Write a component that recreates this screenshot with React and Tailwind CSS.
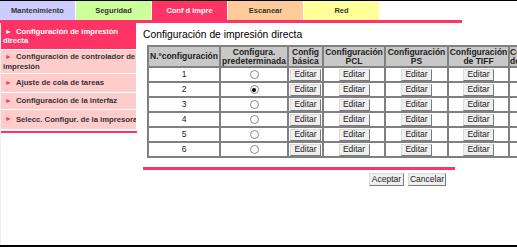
import React from "react";

const tabs = [
  { label: "Mantenimiento", cls: "bg-[#ccccff] text-[#333]" },
  { label: "Seguridad", cls: "bg-[#ccff99] text-[#333]" },
  { label: "Conf d impre", cls: "bg-[#ff3366] text-white" },
  { label: "Escanear", cls: "bg-[#ffcc99] text-[#333]" },
  { label: "Red", cls: "bg-[#ffff99] text-[#333]" },
];

function Radio({ on }) {
  return (
    <span className="inline-flex items-center justify-center w-[9px] h-[9px] rounded-full border border-[#8a8a8a] bg-white align-middle">
      {on && <span className="w-[4px] h-[4px] rounded-full bg-black" />}
    </span>
  );
}

function Btn({ children, w = "w-[31px]" }) {
  return (
    <button
      className={`${w} h-[12px] inline-flex items-center justify-center bg-[#efefef] border border-t-[#dcdcdc] border-l-[#dcdcdc] border-r-[#7a7a7a] border-b-[#7a7a7a] text-[8.5px] leading-none text-[#222] align-middle`}
    >
      {children}
    </button>
  );
}

function Tri({ white }) {
  return (
    <span className={`text-[7px] mr-[4px] ${white ? "text-white" : "text-[#ff3366]"}`}>►</span>
  );
}

const th = "border-2 border-[#808080] bg-[#c8c8c8] text-[8.5px] leading-[9px] font-bold text-[#222] text-center p-0 align-middle";
const td = "border-2 border-[#808080] bg-white text-[8.5px] leading-none text-[#222] text-center p-0 h-[15px] align-middle";
const item = "bg-[#ffcccc] text-[#333] text-[7.7px] font-bold px-[4px] flex items-center whitespace-nowrap overflow-hidden";

export default function App() {
  return (
    <div className="w-[517px] h-[247px] overflow-hidden bg-white font-['Liberation_Sans',Arial,sans-serif] border-t border-black border-b-2 flex flex-col">
      {/* tabs */}
      <div className="flex h-[19px] shrink-0">
        {tabs.map((t) => (
          <div
            key={t.label}
            className={`w-[75px] mr-px flex items-center justify-center text-[7.5px] font-bold ${t.cls}`}
          >
            {t.label}
          </div>
        ))}
      </div>
      <div className="h-[3px] w-[462px] bg-[#ff3366] shrink-0" />
      <div className="flex flex-1 min-h-0 border-l border-[#eeeeee]">
        {/* sidebar */}
        <div className="w-[135px] shrink-0 flex flex-col">
          <div className="h-[26px] bg-[#ff3366] text-white text-[7.7px] font-bold leading-[9px] px-[2px] flex flex-col justify-center">
            <div className="pl-[2px] whitespace-nowrap"><Tri white />Configuración de impresión</div>
            <div>directa</div>
          </div>
          <div className="h-px" />
          <div className="h-[23px] bg-[#ffcccc] text-[#333] text-[7.7px] font-bold leading-[10px] px-[2px] flex flex-col justify-center">
            <div className="pl-[2px] whitespace-nowrap"><Tri />Configuración de controlador de</div>
            <div>impresión</div>
          </div>
          <div className="h-px" />
          <div className={`h-[18px] ${item}`}><Tri />Ajuste de cola de tareas</div>
          <div className="h-px" />
          <div className={`h-[16px] ${item}`}><Tri />Configuración de la interfaz</div>
          <div className="h-px" />
          <div className={`h-[19px] ${item}`}><Tri />Selecc. Configur. de la impresora</div>
          <div className="h-[2px]" />
          <div className="h-[2px] w-[136px] bg-[#ff3366]" />
        </div>
        {/* content */}
        <div className="flex-1 min-w-0 pl-[7px] pt-[5px]">
          <div className="text-[10.3px] leading-[13px] text-[#000] whitespace-nowrap">
            Configuración de impresión directa
          </div>
          <div className="pl-[4px] pt-[4px]">
            <table className="border-collapse table-fixed w-[425px]">
              <thead>
                <tr className="h-[21px]">
                  <th className={`${th} w-[72px]`}>N.ºconfiguración</th>
                  <th className={`${th} w-[68px]`}>Configura.<br />predeterminada</th>
                  <th className={`${th} w-[35px]`}>Config<br />básica</th>
                  <th className={`${th} w-[62px]`}>Configuración<br />PCL</th>
                  <th className={`${th} w-[63px]`}>Configuración<br />PS</th>
                  <th className={`${th} w-[61px]`}>Configuración<br />de TIFF</th>
                  <th className={`${th} w-[64px] text-left whitespace-nowrap`}>Configuración<br />de XPS</th>
                </tr>
              </thead>
              <tbody>
                {[1, 2, 3, 4, 5, 6].map((n) => (
                  <tr key={n}>
                    <td className={td}>{n}</td>
                    <td className={td}><Radio on={n === 2} /></td>
                    <td className={td}><Btn>Editar</Btn></td>
                    <td className={td}><Btn>Editar</Btn></td>
                    <td className={td}><Btn>Editar</Btn></td>
                    <td className={td}><Btn>Editar</Btn></td>
                    <td className={td}><Btn>Editar</Btn></td>
                  </tr>
                ))}
              </tbody>
            </table>
          </div>
          <div className="mt-[9px] h-[3px] w-[312px] bg-[#ff3366]" />
          <div className="flex gap-[4px] pl-[226px] pt-[3px]">
            <Btn w="w-[35px] h-[13px]">Aceptar</Btn>
            <Btn w="w-[38px] h-[13px]">Cancelar</Btn>
          </div>
        </div>
      </div>
    </div>
  );
}
